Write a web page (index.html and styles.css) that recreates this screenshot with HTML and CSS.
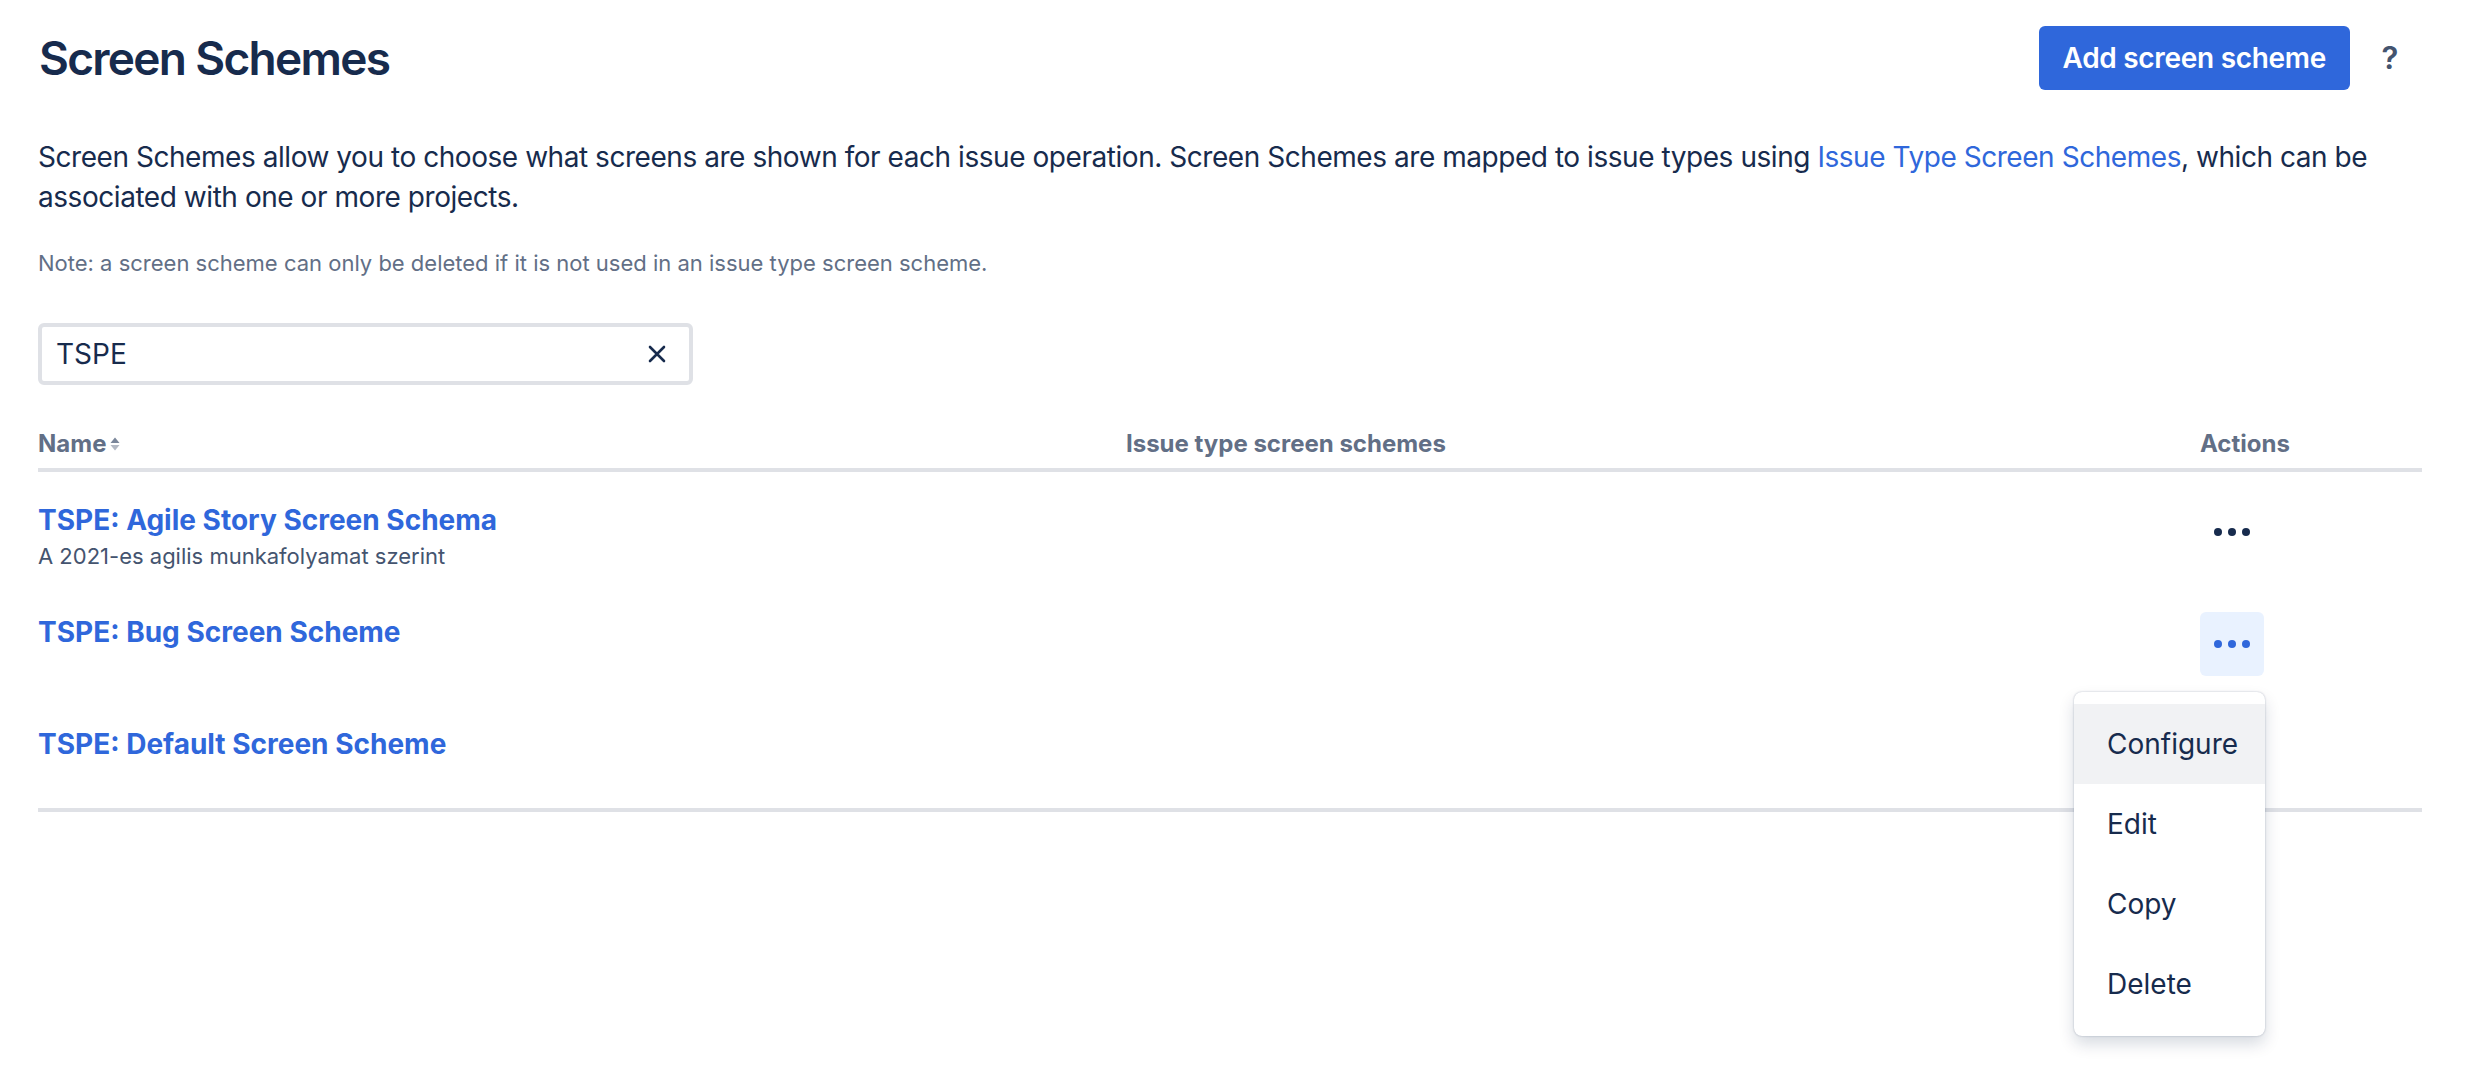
FILE: index.html
```html
<!DOCTYPE html>
<html lang="en">
<head>
<meta charset="utf-8">
<title>Screen Schemes</title>
<link rel="stylesheet" href="styles.css">
</head>
<body>
<main class="page">
  <header class="page-header">
    <h1 class="page-title">Screen Schemes</h1>
    <div class="header-actions">
      <button class="btn-primary" type="button">Add screen scheme</button>
      <span class="help">?</span>
    </div>
  </header>

  <p class="intro">Screen Schemes allow you to choose what screens are shown for each issue operation. Screen Schemes are mapped to issue types using <a class="link" href="#">Issue Type Screen Schemes</a>, which can be associated with one or more projects.</p>
  <p class="note">Note: a screen scheme can only be deleted if it is not used in an issue type screen scheme.</p>

  <div class="search">
    <span class="search-value">TSPE</span>
    <svg class="clear-icon" width="18" height="18" viewBox="0 0 18 18" aria-hidden="true">
      <path d="M2 2 L16 16 M16 2 L2 16" stroke="#172B4D" stroke-width="2.6" stroke-linecap="round" fill="none"/>
    </svg>
  </div>

  <div class="table">
    <div class="row head">
      <div class="cell name-head">Name
        <svg class="sort-icon" width="12" height="18" viewBox="0 0 12 18" aria-hidden="true">
          <path d="M1.5 8 L6 2.5 L10.5 8 Z" fill="#7A869A"/>
          <path d="M1.5 10 L6 15.5 L10.5 10 Z" fill="#B3B9C4"/>
        </svg>
      </div>
      <div class="cell">Issue type screen schemes</div>
      <div class="cell">Actions</div>
    </div>

    <div class="rows">
      <div class="row body-row">
        <div class="cell">
          <a class="scheme-link" href="#">TSPE: Agile Story Screen Schema</a>
          <div class="desc">A 2021-es agilis munkafolyamat szerint</div>
        </div>
        <div class="cell"></div>
        <div class="cell">
          <div class="more-wrap">
            <button class="more" type="button"><span class="dot"></span><span class="dot"></span><span class="dot"></span></button>
          </div>
        </div>
      </div>

      <div class="row body-row">
        <div class="cell">
          <a class="scheme-link" href="#">TSPE: Bug Screen Scheme</a>
        </div>
        <div class="cell"></div>
        <div class="cell">
          <div class="more-wrap">
            <button class="more active" type="button"><span class="dot"></span><span class="dot"></span><span class="dot"></span></button>
            <div class="menu">
              <div class="menu-item hovered">Configure</div>
              <div class="menu-item">Edit</div>
              <div class="menu-item">Copy</div>
              <div class="menu-item">Delete</div>
            </div>
          </div>
        </div>
      </div>

      <div class="row body-row">
        <div class="cell">
          <a class="scheme-link" href="#">TSPE: Default Screen Scheme</a>
        </div>
        <div class="cell"></div>
        <div class="cell"></div>
      </div>
    </div>
  </div>
</main>
</body>
</html>
```

FILE: styles.css
```css
html, body {
  margin: 0;
  padding: 0;
  background: #ffffff;
  min-height: 100%;
}

body {
  font-family: Inter, "Noto Sans", "Liberation Sans", sans-serif;
  color: #172B4D;
}

.page {
  box-sizing: border-box;
  min-height: 1076px;
  padding: 26px 44px 0 38px;
}

.page-header {
  display: flex;
  justify-content: space-between;
  align-items: flex-start;
}

.page-title {
  margin: 4px 0 0 1px;
  font-size: 46px;
  line-height: 56px;
  font-weight: 600;
  letter-spacing: -1.7px;
  color: #172B4D;
}

.header-actions {
  display: flex;
  align-items: center;
  gap: 24px;
  margin-right: 16px;
}

.btn-primary {
  height: 64px;
  padding: 0 24px;
  border: 0;
  border-radius: 6px;
  background: #2F67DB;
  color: #ffffff;
  font-family: inherit;
  font-size: 28px;
  font-weight: 600;
  letter-spacing: -0.3px;
  line-height: 64px;
}

.help {
  width: 32px;
  text-align: center;
  font-size: 31px;
  font-weight: 600;
  color: #44546F;
  line-height: 40px;
}

.intro {
  margin: 47px 0 0;
  font-size: 28px;
  line-height: 40px;
  letter-spacing: -0.45px;
  color: #172B4D;
}

.link {
  color: #2F67DB;
  text-decoration: none;
}

.note {
  margin: 30px 0 0;
  font-size: 22px;
  line-height: 32px;
  color: #626F86;
}

.search {
  margin-top: 44px;
  width: 655px;
  height: 62px;
  box-sizing: border-box;
  border: 4px solid #DFE1E6;
  border-radius: 6px;
  display: flex;
  align-items: center;
  justify-content: space-between;
  padding: 0 23px 0 14px;
}

.search-value {
  font-size: 28px;
  line-height: 40px;
  color: #172B4D;
}

.table {
  margin-top: 43px;
}

.row {
  display: grid;
  grid-template-columns: 1088px 1074px 1fr;
}

.head {
  padding-bottom: 8px;
  border-bottom: 4px solid #DFE1E6;
  font-size: 24px;
  line-height: 32px;
  font-weight: 700;
  color: #626F86;
}

.name-head {
  display: flex;
  align-items: center;
  gap: 3px;
}

.rows {
  border-bottom: 4px solid #DFE1E6;
}

.body-row {
  height: 112px;
  box-sizing: border-box;
  padding-top: 28px;
}

.scheme-link {
  display: block;
  font-size: 28px;
  line-height: 40px;
  font-weight: 700;
  color: #2F67DB;
  text-decoration: none;
}

.desc {
  font-size: 22px;
  line-height: 32px;
  color: #44546F;
}

.more-wrap {
  position: relative;
  width: 64px;
}

.more {
  width: 64px;
  height: 64px;
  padding: 0;
  border: 0;
  border-radius: 6px;
  background: transparent;
  display: flex;
  align-items: center;
  justify-content: center;
  gap: 6px;
}

.more.active {
  background: #E9F2FF;
}

.dot {
  width: 8px;
  height: 8px;
  border-radius: 50%;
  background: #172B4D;
}

.more.active .dot {
  background: #2F67DB;
}

.menu {
  position: absolute;
  top: 80px;
  right: -1px;
  width: 191px;
  padding: 12px 0;
  background: #ffffff;
  border-radius: 8px;
  box-shadow: 0 8px 16px rgba(9, 30, 66, 0.16), 0 0 2px rgba(9, 30, 66, 0.3);
  z-index: 10;
}

.menu-item {
  height: 80px;
  padding-left: 33px;
  font-size: 28px;
  line-height: 80px;
  color: #172B4D;
}

.menu-item.hovered {
  background: #F1F2F4;
}
```
